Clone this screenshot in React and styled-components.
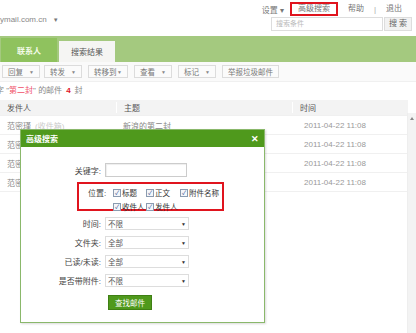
import React from 'react';
import styled, { createGlobalStyle } from 'styled-components';

const GlobalStyle = createGlobalStyle`
  html, body {
    margin: 0;
    padding: 0;
    background: #fff;
  }
  body {
    font-family: "Liberation Sans", "Noto Sans CJK SC", sans-serif;
    font-size: 8px;
    color: #555;
  }
`;

const Page = styled.div`
  width: 416px;
  height: 333px;
  position: relative;
  overflow: hidden;
  background: #fff;
`;

const TopBar = styled.div`
  height: 36px;
  display: flex;
  justify-content: space-between;
`;

const Domain = styled.div`
  padding-top: 15px;
  color: #888;
  font-size: 8px;
  span {
    margin-left: 6px;
    font-size: 6px;
    color: #777;
  }
`;

const TopRight = styled.div`
  display: flex;
  flex-direction: column;
  align-items: flex-end;
  padding-right: 6px;
`;

const Links = styled.div`
  display: flex;
  align-items: center;
  height: 14px;
  margin-top: 2px;
  color: #777;
  white-space: nowrap;
`;

const Link = styled.span`
  padding: 0 6px;
  line-height: 10px;
  border: ${(p) => (p.$boxed ? '2px solid #e0141e' : 'none')};
  margin: ${(p) => (p.$boxed ? '0 2px 0 6px' : '0 2px')};
`;

const Sep = styled.span`
  color: #aaa;
  margin: 0 2px;
`;

const SearchRow = styled.div`
  display: flex;
  margin-top: 1px;
  margin-right: -2px;
`;

const SearchInput = styled.div`
  width: 106px;
  height: 12px;
  border: 1px solid #ddd;
  color: #bbb;
  padding-left: 4px;
  line-height: 12px;
  font-size: 7px;
`;

const SearchBtn = styled.div`
  width: 26px;
  height: 12px;
  border: 1px solid #ddd;
  background: #f2f2f2;
  margin-left: 1px;
  text-align: center;
  line-height: 12px;
  color: #666;
`;

const NavBar = styled.div`
  height: 26px;
  background: #a4c97f;
  display: flex;
  align-items: flex-end;
  padding-left: 1px;
`;

const Tab = styled.div`
  width: 56px;
  height: ${(p) => (p.$active ? '24px' : '21px')};
  margin-right: 2px;
  display: flex;
  align-items: center;
  justify-content: center;
  font-size: 8px;
  background: ${(p) => (p.$active ? '#8fc25e' : '#f5f5f3')};
  color: ${(p) => (p.$active ? '#f3fbe9' : '#555')};
  font-weight: ${(p) => (p.$active ? 'bold' : 'normal')};
`;

const Toolbar = styled.div`
  height: 19px;
  display: flex;
  align-items: center;
  padding-left: 2px;
  background: #fafafa;
  border-bottom: 1px solid #f0f0f0;
`;

const ToolBtn = styled.div`
  height: 13px;
  padding: 0 5px;
  border: 1px solid #dcdcdc;
  background: #fbfbfb;
  display: flex;
  align-items: center;
  justify-content: space-between;
  color: #777;
  font-size: 7.5px;
  white-space: nowrap;
  box-sizing: border-box;
  width: ${(p) => (p.$w ? `${p.$w}px` : 'auto')};
  margin-right: ${(p) => p.$gap || 5}px;
  b {
    font-size: 5px;
    color: #888;
  }
`;

const Info = styled.div`
  height: 18px;
  line-height: 18px;
  color: #888;
  font-size: 8px;
  margin-left: -4px;
  white-space: nowrap;
  em {
    font-style: normal;
    color: #f0506a;
  }
  strong {
    color: #e0141e;
    margin: 0 4px;
  }
`;

const Table = styled.div`
  margin-right: 8px;
`;

const Row = styled.div`
  display: grid;
  grid-template-columns: 116px 176px 1fr;
  height: ${(p) => (p.$head ? '15px' : '18px')};
  align-items: center;
  background: ${(p) => (p.$head ? '#f3f3f3' : '#fff')};
  border-bottom: 1px solid #f0f0f0;
  color: ${(p) => (p.$head ? '#555' : '#888')};
  font-size: 8px;
  white-space: nowrap;
  & > div {
    padding-left: 7px;
  }
  & > div + div {
    border-left: ${(p) => (p.$head ? '1px solid #fff' : 'none')};
  }
`;

const Muted = styled.span`
  color: #ccc;
  margin-left: 4px;
`;

const Time = styled.div`
  color: #999;
  padding-left: 12px !important;
`;

const Scroll = styled.div`
  position: absolute;
  right: 0;
  top: 113px;
  bottom: 0;
  width: 8px;
  background: #f3f3f3;
  border-left: 1px solid #eee;
  &::before {
    content: '';
    position: absolute;
    left: 2px;
    top: 4px;
    border-left: 2px solid transparent;
    border-right: 2px solid transparent;
    border-bottom: 3px solid #888;
  }
`;

const Dialog = styled.div`
  position: absolute;
  left: 20px;
  top: 129px;
  width: 243px;
  height: 192px;
  background: #fff;
  border: 1px solid #8ab86b;
  box-shadow: 1px 1px 2px rgba(0, 0, 0, 0.15);
  display: flex;
  flex-direction: column;
`;

const DialogTitle = styled.div`
  height: 17px;
  background: #4f991c;
  color: #fff;
  font-weight: bold;
  display: flex;
  align-items: center;
  justify-content: space-between;
  padding: 0 5px;
  font-size: 8px;
`;

const Close = styled.span`
  font-size: 9px;
  font-weight: bold;
`;

const Form = styled.div`
  padding-top: 16px;
  display: flex;
  flex-direction: column;
  gap: 6px;
`;

const Field = styled.div`
  display: grid;
  grid-template-columns: 84px 1fr;
  align-items: center;
  color: #444;
  white-space: nowrap;
`;

const Label = styled.div`
  text-align: right;
  padding-right: 4px;
`;

const Input = styled.div`
  width: 80px;
  height: 12px;
  border: 1px solid #ccc;
  box-shadow: inset 1px 1px 1px #eee;
`;

const Select = styled.div`
  width: 78px;
  height: 11px;
  border: 1px solid #ddd;
  padding: 0 2px;
  display: flex;
  align-items: center;
  justify-content: space-between;
  color: #555;
  font-size: 7.5px;
  b {
    font-size: 5px;
    color: #333;
  }
`;

const Position = styled.div`
  margin-left: 56px;
  width: 147px;
  height: 29px;
  border: 2px solid #e0141e;
  display: flex;
  padding-top: 3px;
  box-sizing: border-box;
  margin-top: -1px;
  white-space: nowrap;
`;

const PosLabel = styled.div`
  width: 34px;
  padding-left: 9px;
  box-sizing: border-box;
  color: #444;
`;

const Checks = styled.div`
  display: grid;
  grid-template-columns: 33px 34px 1fr;
  row-gap: 3px;
`;

const Check = styled.label`
  display: flex;
  align-items: center;
  gap: 1px;
  color: #333;
  font-size: 7.5px;
`;

const Box = styled.span`
  width: 6px;
  height: 6px;
  border: 1px solid #8a9bb0;
  background: #f4f6fa;
  display: inline-flex;
  align-items: center;
  justify-content: center;
  font-size: 6px;
  line-height: 6px;
  color: #2a4a8a;
`;

const Submit = styled.div`
  margin-left: 87px;
  margin-top: 2px;
  width: 42px;
  height: 13px;
  background: #4f991c;
  border: 1px solid #3f7f14;
  color: #fff;
  display: flex;
  align-items: center;
  justify-content: center;
  font-size: 7.5px;
`;

const tools = [
  ['回复', 38, 4],
  ['转发', 38, 6],
  ['转移到', 40, 6],
  ['查看', 38, 6],
  ['标记', 38, 6],
];

const rows = ['', '', '', ''];

const CheckItem = ({ children }) => (
  <Check>
    <Box>✓</Box>
    {children}
  </Check>
);

const App = () => (
  <Page>
    <GlobalStyle />
    <TopBar>
      <Domain>
        ymail.com.cn<span>▼</span>
      </Domain>
      <TopRight>
        <Links>
          <span>设置 ▾</span>
          <Link $boxed>高级搜索</Link>
          <Link>帮助</Link>
          <Sep>|</Sep>
          <Link>退出</Link>
        </Links>
        <SearchRow>
          <SearchInput>搜索条件</SearchInput>
          <SearchBtn>搜 索</SearchBtn>
        </SearchRow>
      </TopRight>
    </TopBar>
    <NavBar>
      <Tab $active>联系人</Tab>
      <Tab>搜索结果</Tab>
    </NavBar>
    <Toolbar>
      {tools.map(([t, w, g]) => (
        <ToolBtn key={t} $w={w} $gap={g}>
          {t}
          <b>▼</b>
        </ToolBtn>
      ))}
      <ToolBtn>举报垃圾邮件</ToolBtn>
    </Toolbar>
    <Info>
      字 "<em>第二封</em>" 的邮件<strong>4</strong>封
    </Info>
    <Table>
      <Row $head>
        <div>发件人</div>
        <div>主题</div>
        <div>时间</div>
      </Row>
      {rows.map((_, i) => (
        <Row key={i}>
          <div>
            范密瑾<Muted>(收件箱)</Muted>
          </div>
          <div>新浪的第二封</div>
          <Time>2011-04-22 11:08</Time>
        </Row>
      ))}
    </Table>
    <Scroll />
    <Dialog>
      <DialogTitle>
        高级搜索
        <Close>✕</Close>
      </DialogTitle>
      <Form>
        <Field>
          <Label>关键字:</Label>
          <Input />
        </Field>
        <Position>
          <PosLabel>位置:</PosLabel>
          <Checks>
            <CheckItem>标题</CheckItem>
            <CheckItem>正文</CheckItem>
            <CheckItem>附件名称</CheckItem>
            <CheckItem>收件人</CheckItem>
            <CheckItem>发件人</CheckItem>
          </Checks>
        </Position>
        <Field>
          <Label>时间:</Label>
          <Select>
            不限<b>▼</b>
          </Select>
        </Field>
        <Field>
          <Label>文件夹:</Label>
          <Select>
            全部<b>▼</b>
          </Select>
        </Field>
        <Field>
          <Label>已读/未读:</Label>
          <Select>
            全部<b>▼</b>
          </Select>
        </Field>
        <Field>
          <Label>是否带附件:</Label>
          <Select>
            不限<b>▼</b>
          </Select>
        </Field>
        <Submit>查找邮件</Submit>
      </Form>
    </Dialog>
  </Page>
);

export default App;
